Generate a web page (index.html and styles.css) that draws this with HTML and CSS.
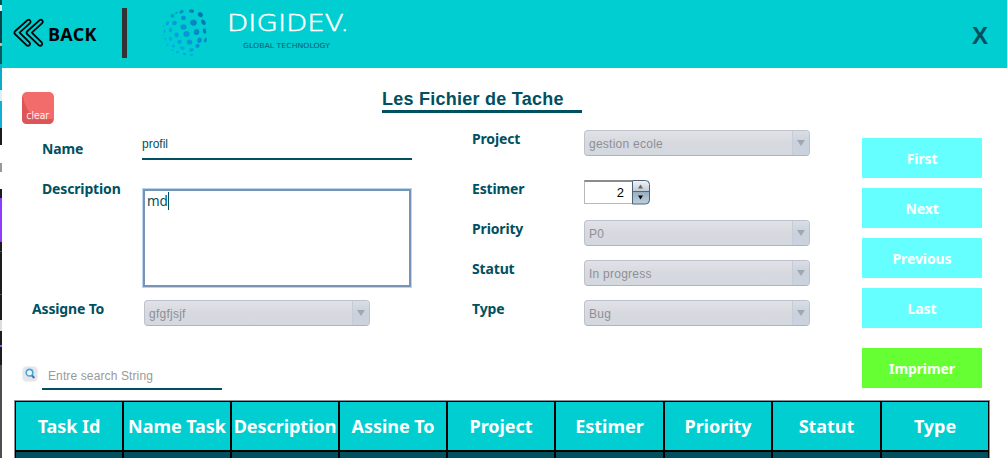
FILE: index.html
```html
<!DOCTYPE html>
<html lang="fr">
<head>
<meta charset="utf-8">
<title>Les Fichier de Tache</title>
<link rel="stylesheet" href="styles.css">
<script src="globe.js" defer></script>
</head>
<body>
<div class="desktop-edge"></div>
<div class="window">
  <header class="topbar">
    <svg class="back-icon" width="32" height="32" viewBox="0 0 32 32"><g fill="none" stroke="#000" stroke-width="1.8" stroke-linejoin="round"><path d="M14.500 3.100L2.300 14Q.5 15.700 2.300 17.400L13.500 28.200Q15.300 29.500 16.700 27.900Q17.600 26.500 16.500 25.300L6.600 15.700L17 6.200Q18.200 4.800 17.200 3.500Q16 2.200 14.500 3.100Z"/><path d="M26.700 3.100L14.500 14Q12.700 15.700 14.500 17.400L25.700 28.200Q27.500 29.500 28.900 27.900Q29.800 26.500 28.700 25.300L18.800 15.700L29.200 6.200Q30.400 4.800 29.400 3.500Q28.200 2.200 26.700 3.100Z"/></g></svg>
    <span class="back">BACK</span>
    <span class="divider"></span>
    <svg class="globe" id="globe" width="48" height="50" viewBox="0 0 48 50"></svg>
    <div class="brand">
      <svg width="122" height="42" viewBox="0 0 122 42">
        <text class="brand-name" x="-1" y="23" textLength="122" lengthAdjust="spacingAndGlyphs">DIGIDEV.</text>
        <text class="brand-sub" x="15" y="40" textLength="87" lengthAdjust="spacingAndGlyphs">GLOBAL TECHNOLOGY</text>
      </svg>
    </div>
    <span class="close">X</span>
  </header>
  <div class="heading">
    <div class="clear"><svg width="32" height="32" viewBox="0 0 32 32"><rect width="32" height="32" rx="5" fill="#f26c6c"/><path d="M1 5Q3 18 14 27H31Q31 32 27 32H5Q0 32 0 27V5Z" fill="#dc5658"/><text class="clear-text" x="4.500" y="26.500" textLength="22.500" lengthAdjust="spacingAndGlyphs">clear</text></svg></div>
    <h1 class="title">Les Fichier de Tache</h1>
  </div>
  <main class="form">
    <section class="left">
      <div class="row name"><label class="label">Name</label><div class="input">profil</div></div>
      <div class="row description"><label class="label">Description</label><div class="area"><span class="typed">md</span></div></div>
      <div class="row assign"><label class="label">Assigne To</label><div class="select">gfgfjsjf</div></div>
      <div class="row search">
        <svg width="16" height="16" viewBox="0 0 16 16"><rect x=".5" y=".5" width="15" height="15" rx="4" fill="#e6e6e9" stroke="#f1f1f3"/><circle cx="7.500" cy="6.700" r="3.300" fill="#e8f8ff" stroke="#4aa3dc" stroke-width="1.600"/><path d="M10 9.500L12.300 12" stroke="#3478b8" stroke-width="2"/></svg>
        <div class="search-input">Entre search String</div>
      </div>
    </section>
    <section class="middle">
      <div class="row tall"><label class="label">Project</label><div class="select">gestion ecole</div></div>
      <div class="row"><label class="label">Estimer</label><div class="spinner"><span class="value">2</span><span class="steps"><svg width="18" height="25" viewBox="0 0 18 25"><defs><linearGradient id="step" x2="0" y2="1"><stop offset="0" stop-color="#f2f5f8"/><stop offset=".45" stop-color="#c1cbd6"/><stop offset=".5" stop-color="#9cafc0"/><stop offset="1" stop-color="#bdd0df"/></linearGradient></defs><path d="M.5.5H13.500Q17.500.5 17.500 4.500V20Q17.500 24 13.500 24H.5Z" fill="url(#step)" stroke="#4d6277"/><path d="M1 11.500H17" stroke="#52687e"/><path d="M6 8.500L8.500 4.500L11 8.500Z" fill="#666"/><path d="M6 15.500H11L8.500 19.500Z" fill="#000"/></svg></span></div></div>
      <div class="row"><label class="label">Priority</label><div class="select">P0</div></div>
      <div class="row"><label class="label">Statut</label><div class="select">In progress</div></div>
      <div class="row"><label class="label">Type</label><div class="select">Bug</div></div>
    </section>
    <nav class="actions">
      <div class="button">First</div><div class="button">Next</div><div class="button">Previous</div><div class="button">Last</div><div class="button print">Imprimer</div>
    </nav>
  </main>
  <div class="table">
    <div class="th">Task Id</div><div class="th">Name Task</div><div class="th">Description</div><div class="th">Assine To</div><div class="th">Project</div><div class="th">Estimer</div><div class="th">Priority</div><div class="th">Statut</div><div class="th">Type</div>
    <div class="td"></div><div class="td"></div><div class="td"></div><div class="td"></div><div class="td"></div><div class="td"></div><div class="td"></div><div class="td"></div><div class="td"></div>
  </div>
</div>
</body>
</html>
```
FILE: styles.css
```css
* { box-sizing: border-box; }
body { margin: 0; width: 1007px; height: 458px; overflow: hidden; display: flex; background: #fff; font-family: "Liberation Sans", Arial, sans-serif; color: #005060; }
.desktop-edge { width: 2px; background: linear-gradient(#064d57 0 5px, #e0f0f2 5px 11px, #06434b 11px 43px, #e4b460 43px 46px, #075961 46px 64px, #0cabc7 64px 90px, #d5f2f7 90px 101px, #10afd3 101px 128px, #1d1a1f 128px 145px, #fff 145px 163px, #999 163px 172px, #fff 172px 189px, #1d1a1f 189px 198px, #8f3bff 198px 242px, #1c1c1e 242px 251px, #555 251px 252px, #1c1c1e 252px 294px, #555 294px 295px, #1c1c1e 295px 320px, #ddd 320px 331px, #1c1c1e 331px 345px, #8f55ff 345px 347px, #1c1c1e 347px 365px, #4d4d4f 365px); }
.window { width: 1005px; flex: none; }
.topbar { height: 68px; background: #00ced1; display: flex; align-items: flex-start; }
.back-icon { margin: 17px 0 0 11px; }
.back { width: 74px; margin: 22px 0 0 3px; font: bold 18px/25px "Open Sans", sans-serif; color: #000; letter-spacing: .15px; }
.divider { width: 5px; height: 50px; margin-top: 8px; background: #333; }
.globe { margin: 8px 0 0 34px; }
.brand { margin: 8px 0 0 19px; width: 640px; }
.brand svg { display: block; overflow: visible; }
.brand-name { font: 22.500px "DejaVu Sans", sans-serif; font-weight: 200; fill: #fff; stroke: #fff; stroke-width: .5px; }
.brand-sub { font: 7px "DejaVu Sans", sans-serif; fill: #075f70; }
.close { margin: 22px 0 0 104px; font: bold 24px/28px "Liberation Sans", sans-serif; color: #005060; }
.heading { height: 62px; display: flex; align-items: flex-start; }
.clear { height: 32px; margin: 24px 0 0 20px; }
.clear-text { font: 11px "DejaVu Sans", sans-serif; font-weight: 200; fill: #fff; stroke: #fff; stroke-width: .25px; }
.title { width: 200px; height: 25px; margin: 20px 0 0 328px; border-bottom: 3px solid #005060; font-size: 18px; line-height: 22px; letter-spacing: .25px; white-space: nowrap; }
.form { height: 270px; display: flex; }
.left { width: 470px; flex: none; }
.middle { width: 390px; flex: none; }
.row { display: flex; align-items: flex-start; height: 40px; }
.row.tall { height: 50px; }
.label { width: 112px; flex: none; font: bold 14px/20px "Noto Sans", sans-serif; white-space: nowrap; letter-spacing: -.15px; }
.middle .label { margin-top: -1px; }
.row.name { height: 58px; padding-left: 40px; }
.name .label { width: 100px; margin-top: 9px; }
.input { width: 270px; height: 30px; border-bottom: 2px solid #005060; font-size: 12px; line-height: 28px; }
.row.description { height: 112px; padding-left: 40px; }
.description .label { width: 100px; margin-top: -9px; }
.area { width: 270px; height: 100px; border: 1px solid #b9d6f1; outline: 2px solid #7894b4; outline-offset: -3px; padding: 3px 4px; }
.typed { display: inline-block; height: 18px; border-right: 1px solid #005060; font: 13.500px/19px "Noto Sans", sans-serif; letter-spacing: -.2px; }
.row.assign { height: 66px; padding-left: 30px; }
.assign .label { margin-top: -1px; }
.select { position: relative; width: 226px; height: 26px; border: 1px solid #bfc2ce; border-bottom-color: #afb3c1; border-radius: 4px; padding-left: 4px; background: linear-gradient(#e1e2e7, #d7d9df 50%, #d4d8df); color: #8e8f96; font-size: 12px; line-height: 26px; letter-spacing: .25px; }
.select::before { content: ""; position: absolute; right: 0; top: 0; width: 16px; height: 24px; border-left: 1px solid #c7ccd6; border-radius: 0 3px 3px 0; background: linear-gradient(#d9dee5, #c9d1dc 50%, #c9d2dd); }
.select::after { content: ""; position: absolute; right: 4px; top: 9px; border: solid transparent; border-width: 6px 4px 0; border-top-color: #a2a6b0; }
.row.search { height: 24px; padding-left: 20px; }
.search-input { width: 180px; height: 24px; margin-left: 4px; padding-left: 6px; border-bottom: 2px solid #005060; color: #999; font-size: 12px; line-height: 20px; letter-spacing: .12px; white-space: nowrap; }
.spinner { display: flex; height: 25px; }
.value { width: 48px; height: 24px; border: 1px solid #b8b8b8; border-top: 2px solid #8c8c8c; border-right: 0; padding-right: 8px; color: #000; text-align: right; font-size: 13px; line-height: 22px; }
.steps svg { display: block; }
.actions { display: flex; flex-direction: column; gap: 10px; margin-top: 8px; }
.button { width: 120px; height: 40px; background: #66ffff; color: #fff; text-align: center; font: bold 14px/41px "Noto Sans", sans-serif; letter-spacing: -.1px; }
.print { margin-top: 10px; background: #66ff33; }
.table { width: 976px; height: 58px; margin-left: 12px; display: grid; grid-template-columns: repeat(5, 106px) 107px 106px 107px 106px; grid-template-rows: 48px 6px; gap: 2px; padding: 1px; border: 1px solid #8b8d99; border-bottom: 0; background: #000; }
.th { min-width: 0; background: #00ced1; color: #fff; text-align: center; white-space: nowrap; font: bold 18px/49px "Noto Sans", sans-serif; letter-spacing: -.05px; }
.td { background: #005060; }
```
FILE: globe.js
```js
// Halftone dots of the logo: [x, y, radius x, radius y, tilt]
const dots = [
  [20,4,2,1.4,-20],[30,3,2.300,1.600,10],[39,7,2,2.500,-45],[11,8,1.700,1.700,-30],[22,10,2.200,2,-10],[32,14.500,3,2.700,20],[42,14.500,1.700,2.700,-30],
  [6,15,1.300,2,30],[13,15,2,2,0],[22,19,2.700,2.500,0],[3,23,.8,1.700,10],[9,22,1.500,2,10],[15,27,2,2.200,0],[25,26,2.700,2.700,0],[35,24,2.500,2.700,0],[43,23,1.500,2.500,-10],
  [4,31,.8,1.500,-10],[9,31,1.500,1.800,-10],[18,34,2.100,2,0],[28,34,2.500,2.300,0],[38,32,2,2.400,20],[44,32,1.100,2.200,15],
  [6,37,1,1.200,-30],[12,38,1.500,1.400,0],[21,40,2,1.500,10],[30,42,2,1.500,-10],[36,38,2,1.800,-20],[11,42,1,.8,0],[16,44,1.400,1,20],[23,46,1.500,.9,0],[30,47,1.300,.7,-10],
  [2,18,.5,1,20],[1.500,27,.5,1,0],[15,5,1.200,.9,-20]
];
const globe = document.getElementById("globe");
for (const [x, y, rx, ry, tilt] of dots) {
  const dot = document.createElementNS("http://www.w3.org/2000/svg", "ellipse");
  const values = { cx: x + .5, cy: y, rx: rx * 1.12, ry: ry * 1.12, transform: `rotate(${tilt} ${x} ${y})`, fill: `hsl(202 95% ${43 - (x - y) * .25}%)`, opacity: .65 + x / 150 };
  for (const key in values) dot.setAttribute(key, values[key]);
  globe.appendChild(dot);
}
```
